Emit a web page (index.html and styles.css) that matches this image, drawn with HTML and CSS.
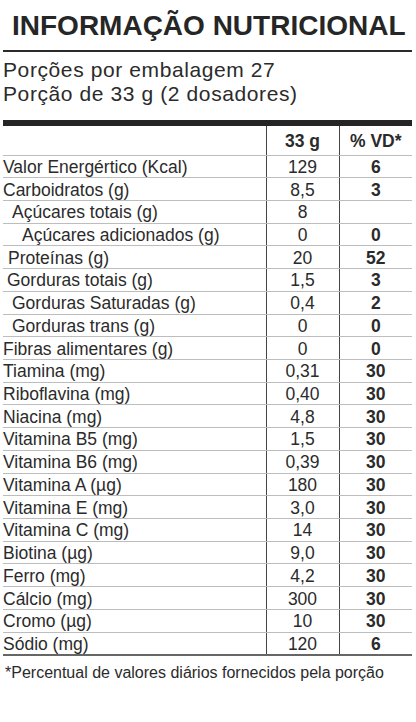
FILE: index.html
```html
<!DOCTYPE html>
<html lang="pt-BR">
<head>
  <meta charset="UTF-8" />
  <meta name="viewport" content="width=device-width, initial-scale=1" />
  <title>Informação Nutricional</title>
  <link rel="stylesheet" href="styles.css">
</head>
<body>
  <div class="label">
    <h1 class="title">INFORMAÇÃO NUTRICIONAL</h1>

    <div class="serving">
      <p>Porções por embalagem 27</p>
      <p>Porção de 33 g (2 dosadores)</p>
    </div>

    <table class="facts">
      <thead>
        <tr>
          <th class="name"></th>
          <th class="qty">33 g</th>
          <th class="vd">% VD*</th>
        </tr>
      </thead>
      <tbody>
        <tr><td class="name">Valor Energértico (Kcal)</td><td class="qty">129</td><td class="vd">6</td></tr>
        <tr><td class="name">Carboidratos (g)</td><td class="qty">8,5</td><td class="vd">3</td></tr>
        <tr><td class="name sub1">Açúcares totais (g)</td><td class="qty">8</td><td class="vd"></td></tr>
        <tr><td class="name sub2">Açúcares adicionados (g)</td><td class="qty">0</td><td class="vd">0</td></tr>
        <tr><td class="name sub-p">Proteínas (g)</td><td class="qty">20</td><td class="vd">52</td></tr>
        <tr><td class="name sub-g">Gorduras totais (g)</td><td class="qty">1,5</td><td class="vd">3</td></tr>
        <tr><td class="name sub1">Gorduras Saturadas (g)</td><td class="qty">0,4</td><td class="vd">2</td></tr>
        <tr><td class="name sub1">Gorduras trans (g)</td><td class="qty">0</td><td class="vd">0</td></tr>
        <tr><td class="name">Fibras alimentares (g)</td><td class="qty">0</td><td class="vd">0</td></tr>
        <tr><td class="name">Tiamina (mg)</td><td class="qty">0,31</td><td class="vd">30</td></tr>
        <tr><td class="name">Riboflavina (mg)</td><td class="qty">0,40</td><td class="vd">30</td></tr>
        <tr><td class="name">Niacina (mg)</td><td class="qty">4,8</td><td class="vd">30</td></tr>
        <tr><td class="name">Vitamina B5 (mg)</td><td class="qty">1,5</td><td class="vd">30</td></tr>
        <tr><td class="name">Vitamina B6 (mg)</td><td class="qty">0,39</td><td class="vd">30</td></tr>
        <tr><td class="name">Vitamina A (µg)</td><td class="qty">180</td><td class="vd">30</td></tr>
        <tr><td class="name">Vitamina E (mg)</td><td class="qty">3,0</td><td class="vd">30</td></tr>
        <tr><td class="name">Vitamina C (mg)</td><td class="qty">14</td><td class="vd">30</td></tr>
        <tr><td class="name">Biotina (µg)</td><td class="qty">9,0</td><td class="vd">30</td></tr>
        <tr><td class="name">Ferro (mg)</td><td class="qty">4,2</td><td class="vd">30</td></tr>
        <tr><td class="name">Cálcio (mg)</td><td class="qty">300</td><td class="vd">30</td></tr>
        <tr><td class="name">Cromo (µg)</td><td class="qty">10</td><td class="vd">30</td></tr>
        <tr><td class="name">Sódio (mg)</td><td class="qty">120</td><td class="vd">6</td></tr>
      </tbody>
    </table>

    <p class="footnote">*Percentual de valores diários fornecidos pela porção</p>
  </div>
</body>
</html>
```

FILE: styles.css
```css
/* Reset */
* {
  margin: 0; padding: 0; box-sizing: border-box;
  font-family: "Liberation Sans", Arial, sans-serif;
}
body {
  background: #fff;
  color: #2b2b2b;
}
/* Label */
.label {
  width: 416px;
  padding: 0 4px 0 3px;
}
.title {
  font-size: 28px;
  font-weight: bold;
  line-height: 32px;
  padding: 10px 0 8px 9px;
  border-bottom: 2px solid #2b2b2b;
  color: #262626;
}
/* Serving info */
.serving {
  padding: 6px 0 14px;
  border-bottom: 6px solid #252525;
}
.serving p {
  font-size: 21px;
  line-height: 24px;
  letter-spacing: 0.6px;
}
/* Table */
.facts {
  width: 100%;
  border-collapse: collapse;
  table-layout: fixed;
  border-bottom: 2px solid #666;
}
.facts th,
.facts td {
  font-size: 17.5px;
  line-height: 20px;
  height: 22.73px;
  padding: 1px 0 0;
  border-bottom: 1px solid #bdbdbd;
  white-space: nowrap;
}
.facts tbody tr:last-child td {
  border-bottom: none;
}
.facts th {
  height: 29px;
  font-weight: bold;
}
.facts .name {
  width: 263px;
  text-align: left;
}
.facts .qty {
  width: 73px;
  text-align: center;
  border-left: 1px solid #444;
  border-right: 1px solid #444;
}
.facts .vd {
  width: 73px;
  text-align: center;
  font-weight: bold;
}
.facts .sub1 { padding-left: 9px; }
.facts .sub2 { padding-left: 19px; }
.facts .sub-p { padding-left: 5px; }
.facts .sub-g { padding-left: 4px; }
/* Footnote */
.footnote {
  font-size: 16px;
  line-height: 18px;
  margin-top: 8px;
  padding-left: 2px;
}
```
